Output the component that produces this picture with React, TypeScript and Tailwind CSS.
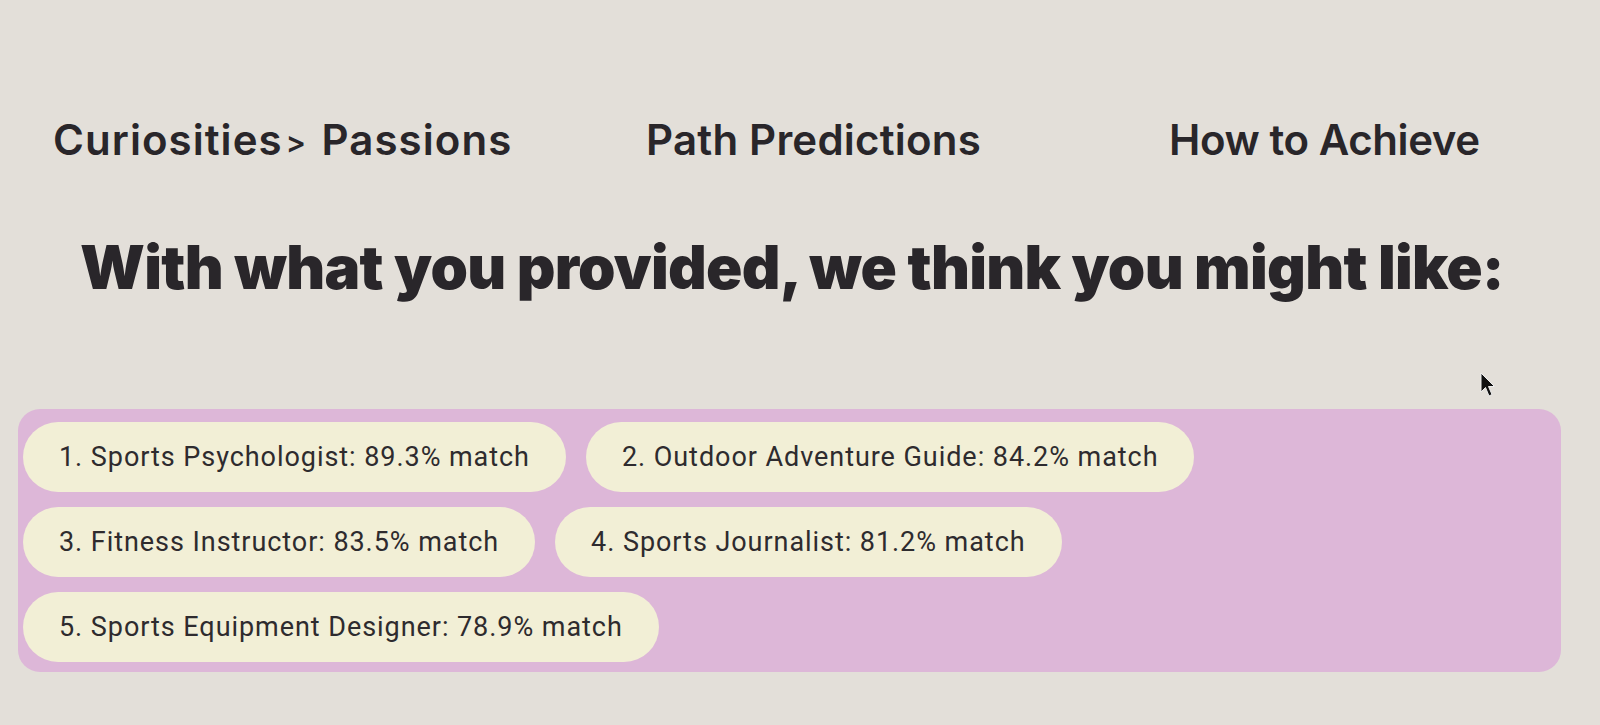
import React from 'react';

const matches = [
  '1. Sports Psychologist: 89.3% match',
  '2. Outdoor Adventure Guide: 84.2% match',
  '3. Fitness Instructor: 83.5% match',
  '4. Sports Journalist: 81.2% match',
  '5. Sports Equipment Designer: 78.9% match',
];

export default function App() {
  return (
    <div className="relative w-full h-[725px] overflow-hidden bg-[#e3dfd9] text-[#29262a] font-['Inter',sans-serif]">
      {/* nav */}
      <nav className="flex items-center pt-[108px] pl-[53px] text-[42px] font-semibold">
        <span className="w-[593px] tracking-[0.025em]">
          Curiosities<span className="text-[30px] align-[2px] mx-[3px]">&gt;</span> Passions
        </span>
        <span className="w-[523px] tracking-[0.005em]">Path Predictions</span>
        <span className="tracking-[-0.01em]">How to Achieve</span>
      </nav>

      <h1 className="mt-[66px] pl-[80px] text-[60px] font-black tracking-[-0.012em] leading-none">
        With what you provided, we think you might like:
      </h1>

      <div className="mt-[112px] mx-[18px] w-[1543px] rounded-[22px] bg-[#ddb7d8] px-[5px] pt-[13px] pb-[10px]">
        <div className="flex flex-wrap gap-x-[20px] gap-y-[15px]">
          {matches.map((m) => (
            <div
              key={m}
              className="h-[70px] flex items-center px-[36px] rounded-full bg-[#f2efd6] text-[27px] tracking-[0.035em] font-['Roboto',sans-serif] text-[#2e2b2e]"
            >
              {m}
            </div>
          ))}
        </div>
      </div>

      {/* cursor */}
      <svg className="absolute left-[1480px] top-[372px]" width="16" height="26" viewBox="0 0 16 26">
        <path d="M1 1 L1 20 L5.5 15.5 L9 24 L12 22.5 L8.5 14.5 L14.5 14.5 Z" fill="#111" stroke="#eee" strokeWidth="1" />
      </svg>
    </div>
  );
}
